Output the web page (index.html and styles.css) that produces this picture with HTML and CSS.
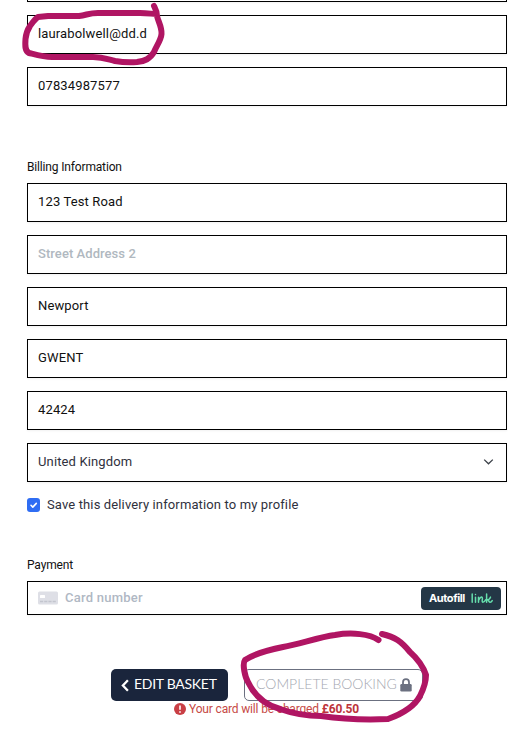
FILE: index.html
```html
<!DOCTYPE html>
<html lang="en">
<head>
<meta charset="utf-8">
<title>Checkout</title>
<link rel="stylesheet" href="styles.css">
</head>
<body>
<main class="checkout">
  <section class="fields contact">
    <div class="field field-cut"></div>
    <div class="field"><span>laurabolwell@dd.d</span></div>
    <div class="field"><span>07834987577</span></div>
  </section>
  <h2 class="label">Billing Information</h2>
  <section class="fields">
    <div class="field"><span>123 Test Road</span></div>
    <div class="field placeholder"><span>Street Address 2</span></div>
    <div class="field"><span>Newport</span></div>
    <div class="field"><span>GWENT</span></div>
    <div class="field"><span>42424</span></div>
    <div class="field select"><span>United Kingdom</span>
      <svg width="11" height="8" viewBox="0 0 11 8"><path d="M1.2 1.6 5.5 5.8 9.8 1.6" fill="none" stroke="#3b4048" stroke-width="1.3"/></svg>
    </div>
  </section>
  <div class="save">
    <svg width="13" height="14" viewBox="0 0 13 14"><rect width="13" height="14" rx="3" fill="#2f6df3"/><path d="M4 7.3 5.8 9.1 9.3 5.4" fill="none" stroke="#fff" stroke-width="1.6" stroke-linecap="round" stroke-linejoin="round"/></svg>
    <span>Save this delivery information to my profile</span>
  </div>
  <h2 class="label payment-label">Payment</h2>
  <div class="field card">
    <svg class="card-icon" width="20" height="14" viewBox="0 0 20 14"><rect y=".5" width="20" height="13" rx="1.5" fill="#dedfe6"/><rect x="2" y="4" width="5" height="3" rx=".5" fill="#fff"/><path d="M2 10.5h16" stroke="#c3c5ce" stroke-width="1.6" stroke-dasharray="3.2 1"/></svg>
    <span class="card-text">Card number</span>
    <div class="autofill"><span>Autofill</span>
      <svg width="22" height="11" viewBox="0 0 22 11" fill="none" stroke="#66dfad" stroke-width="1.5" stroke-linecap="round" stroke-linejoin="round"><path d="M1.2 1v8.3M4.5 4.2v5.1M4.5 1.4v.2M7.5 9.3V4.2M7.5 7.4c1-2 2.2-3.4 3.3-3.3 1.7.3-.7 5 1.1 5.2 1.2 0 2.1-1.3 2.9-2.6M15.6 1v8.3M15.600 7c2 0 3.400-1.200 3.900-2.900M16.600 6.800c1.400.2 1.100 2.500 2.600 2.500.9 0 1.500-.7 2-1.700"/></svg>
    </div>
  </div>
  <div class="actions">
    <div class="button edit"><svg width="8" height="13" viewBox="0 0 8 13"><path d="M6.900 1.300 1.900 6.500l5 5.200" fill="none" stroke="#fff" stroke-width="2.300"/></svg><span>EDIT BASKET</span></div>
    <div class="button complete"><span>COMPLETE BOOKING</span><svg width="12" height="14" viewBox="0 0 12 14"><path d="M3 7V4.200a3 3 0 0 1 6 0V7" fill="none" stroke="#6b7080" stroke-width="1.800"/><rect x=".3" y="6" width="11.400" height="7.500" rx="1.300" fill="#6b7080"/></svg></div>
  </div>
  <p class="notice"><svg width="12" height="12" viewBox="0 0 12 12"><circle cx="6" cy="6" r="6" fill="#c93f45"/><path d="M6 2.500v4.200M6 8.200v1.500" stroke="#fff" stroke-width="1.600"/></svg><span>Your card will be charged <b>£60.50</b></span></p>
</main>
<svg class="marks" width="520" height="737" viewBox="0 0 520 737" fill="none" stroke="#b01563" stroke-width="6" stroke-linecap="round" stroke-linejoin="round">
  <path d="M154 6C155 8 157 11 157 16C158 21 162 27 161.500 34C161 40 157 45 154 52C150 59 145 61 137 62C130 62.500 121 62 115 61C107 59 103 57 93 57L52 57C43 57 35 54.500 29 53C25 51 25 46 25.500 39C26 33 28 29 30 26C33 22 35 19 38 17L48 16L79 16C87 15 89 13 98 13L140 13C148 13 152 14 156 14"/>
  <path d="M378.500 640C370 634 352 632 335 635C319 637 300 644 283 647C268 650 254 654 245 660C242 664 245 677 248 682C255 697 266 705 280 709C294 714 304 716 321 716C342 719 365 720 388 719C399 715 413 709 420 696C424 688 426 683 426 675C423 666 419 660 410 652C401 641 395 637 382 634"/>
</svg>
</body>
</html>
```

FILE: styles.css
```css
* { box-sizing: border-box; }
body {
  margin: 0;
  background: #fff;
  color: #111;
  font: 13px/16px Roboto, "Liberation Sans", sans-serif;
  overflow: hidden;
}
svg { display: block; flex: none; }
.checkout { width: 480px; margin-left: 27px; }
.fields { display: flex; flex-direction: column; gap: 13px; }
.field {
  display: flex;
  align-items: center;
  height: 39px;
  padding: 0 10px 2px;
  border: 1px solid #000;
  background: #fff;
  box-shadow: 0 1px 2px rgba(0, 0, 0, .06);
  letter-spacing: .14px;
}
.field-cut { height: 2px; border-top: 0; padding: 0; }
.placeholder { color: #b0b8c0; font-weight: 500; letter-spacing: .06px; }
.select { justify-content: space-between; padding-right: 12px; color: #30313d; }
.label {
  margin: 53px 0 8px;
  font-size: 12px;
  line-height: 16px;
  font-weight: 400;
  letter-spacing: -.16px;
}
.save {
  display: flex;
  align-items: center;
  gap: 7px;
  height: 16px;
  margin-top: 15px;
  color: #30313d;
  letter-spacing: .13px;
}
.payment-label { margin-top: 44px; }
.card { height: 34px; padding: 0 5px 0 10px; }
.card-text { margin-left: 7px; color: #b0b8c4; font-weight: 500; letter-spacing: .25px; }
.autofill {
  display: flex;
  align-items: center;
  justify-content: space-between;
  width: 80px;
  height: 23px;
  margin-left: auto;
  padding: 0 8px;
  border-radius: 4px;
  background: #243746;
  color: #fff;
  font: 700 11px/14px Inter, sans-serif;
  letter-spacing: -.4px;
}
.actions { display: flex; gap: 16px; margin: 54px 0 0 84px; }
.button {
  display: flex;
  align-items: center;
  height: 32px;
  border-radius: 5px;
  font: 400 14px/18px Lato, sans-serif;
  white-space: nowrap;
}
.button span { padding-bottom: 2px; }
.edit { width: 117px; padding-left: 10px; gap: 5px; background: #1a253c; color: #fff; letter-spacing: -.28px; }
.complete { width: 179px; padding-left: 11px; gap: 3px; border: 1px solid #6b7080; color: #a4a7b0; font-weight: 300; }
.notice {
  display: flex;
  align-items: center;
  gap: 3px;
  height: 16px;
  margin: 0 0 0 147px;
  color: #c64a46;
  font-size: 12px;
  letter-spacing: -.16px;
}
.notice b { color: #bd343b; }
.marks { position: absolute; left: 0; top: 0; }
```
